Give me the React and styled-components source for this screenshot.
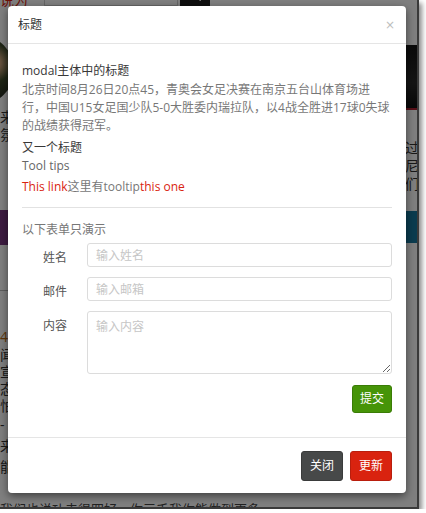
import React from 'react';
import styled, { createGlobalStyle } from 'styled-components';
import { Search } from 'lucide-react';

const GlobalStyle = createGlobalStyle`
  html, body {
    margin: 0;
    padding: 0;
    background: #fff;
  }
  body {
    font-family: "Open Sans", "Noto Sans CJK SC", sans-serif;
  }
  * {
    box-sizing: border-box;
  }
`;

const Frame = styled.div`
  position: relative;
  width: 419px;
  height: 509px;
  overflow: hidden;
  background: #fff;
  border-right: 2px solid #3a3a3a;
  border-bottom: 2px solid #3a3a3a;
  box-shadow: 3px 3px 5px rgba(0, 0, 0, 0.45);
`;

/* page behind the backdrop */
const Page = styled.div`
  display: flex;
  flex-direction: column;
  height: 100%;
  font-size: 14px;
  color: #333;
`;

const TopBar = styled.div`
  display: flex;
  align-items: flex-end;
  height: 6px;
  flex-shrink: 0;
`;

const Brand = styled.span`
  width: 44px;
  flex-shrink: 0;
  color: #d9230f;
  font-size: 14px;
  line-height: 18px;
  margin-bottom: -3px;
`;

const SearchBox = styled.div`
  width: 134px;
  height: 30px;
  flex-shrink: 0;
  border: 1px solid #ccc;
  background: #fff;
  color: #999;
  font-size: 13px;
  padding: 0 10px;
  display: flex;
  align-items: flex-end;
  padding-bottom: 7px;
`;

const SearchButton = styled.div`
  width: 30px;
  height: 30px;
  margin-left: 2px;
  flex-shrink: 0;
  background: #1e1e1e;
  color: #fff;
  display: flex;
  align-items: flex-end;
  justify-content: center;
  padding-bottom: 4px;
`;

const Columns = styled.div`
  flex: 1;
  display: flex;
  min-height: 0;
  overflow: hidden;
`;

const SideCol = styled.div`
  width: ${(p) => p.$width}px;
  flex-shrink: 0;
  overflow: hidden;
  display: flex;
  flex-direction: column;
  align-items: ${(p) => (p.$right ? 'flex-start' : 'flex-end')};
`;

const MainCol = styled.div`
  flex: 1;
`;

const Avatar = styled.div`
  flex-shrink: 0;
  width: 70px;
  height: 70px;
  margin-top: 29px;
  border-radius: 50%;
  background: radial-gradient(circle at 70% 40%, #c9a27a 0 12%, #3d4a2a 30%, #1a1a1a 70%);
`;

const Photo = styled.div`
  flex-shrink: 0;
  width: 100%;
  height: 65px;
  margin-top: 39px;
  background: linear-gradient(180deg, #141414, #2a2a2a 60%, #101010);
  border-bottom: 2px solid #b02030;
`;

const SideText = styled.div`
  width: 14px;
  flex-shrink: 0;
  font-size: 14px;
  line-height: ${(p) => p.$lh || 18}px;
  margin-top: ${(p) => p.$top || 0}px;
  color: ${(p) => p.$color || '#333'};
  word-break: break-all;
`;

const Band = styled.div`
  flex-shrink: 0;
  width: 100%;
  height: ${(p) => p.$h}px;
  margin-top: ${(p) => p.$top}px;
  background: ${(p) => p.$color};
`;

const ThinRule = styled.div`
  flex-shrink: 0;
  width: 100%;
  margin-top: ${(p) => p.$top}px;
  border-top: 1px solid #bbb;
`;

const BottomLine = styled.div`
  height: 9px;
  flex-shrink: 0;
  overflow: hidden;
  font-size: 13px;
  line-height: 22px;
  color: #444;
  white-space: nowrap;
`;

const Backdrop = styled.div`
  position: absolute;
  inset: 0;
  background: rgba(0, 0, 0, 0.5);
`;

/* modal */
const Modal = styled.div`
  position: absolute;
  left: 8px;
  top: 6px;
  width: 398px;
  height: 487px;
  background: #fff;
  border-radius: 4px;
  box-shadow: 0 3px 9px rgba(0, 0, 0, 0.5);
  display: flex;
  flex-direction: column;
  font-size: 12px;
`;

const Header = styled.div`
  height: 38px;
  flex-shrink: 0;
  padding: 0 11px 0 10px;
  display: flex;
  align-items: center;
  justify-content: space-between;
  border-bottom: 1px solid #e5e5e5;
`;

const Title = styled.h4`
  margin: 0;
  font-size: 12px;
  font-weight: 400;
  color: #333;
  line-height: 18px;
`;

const Close = styled.button`
  border: none;
  background: none;
  padding: 0;
  font-family: "DejaVu Sans", sans-serif;
  font-size: 12px;
  line-height: 1;
  color: #bdbdbd;
  cursor: pointer;
`;

const Body = styled.div`
  flex: 1;
  padding: 18px 14px 0;
  display: flex;
  flex-direction: column;
`;

const Heading = styled.h5`
  margin: ${(p) => p.$top || 0}px 0 0;
  font-size: 12px;
  font-weight: 400;
  line-height: 18px;
  color: #383838;
`;

const Para = styled.p`
  margin: ${(p) => p.$top || 0}px 0 0;
  font-size: 12px;
  line-height: 18px;
  color: ${(p) => p.$color || '#777'};
`;

const Red = styled.a`
  color: #d9230f;
  text-decoration: none;
`;

const Rule = styled.hr`
  margin: 11px 0 0;
  border: none;
  border-top: 1px solid #e2e2e2;
`;

const Form = styled.form`
  margin-top: 4px;
  display: grid;
  grid-template-columns: 45px 1fr;
  column-gap: 20px;
  row-gap: 10px;
`;

const Label = styled.label`
  text-align: right;
  padding-top: 6px;
  font-size: 12px;
  line-height: 18px;
  color: #555;
`;

const fieldCss = `
  width: 100%;
  border: 1px solid #dcdcdc;
  border-radius: 3px;
  background: #fff;
  font-family: "Open Sans", "Noto Sans CJK SC", sans-serif;
  font-size: 12px;
  color: #555;
  outline: none;
  &::placeholder {
    color: #c6c6c6;
  }
`;

const Input = styled.input`
  ${fieldCss}
  height: 24px;
  padding: 0 8px;
`;

const TextArea = styled.textarea`
  ${fieldCss}
  height: 63px;
  padding: 6px 8px;
  line-height: 18px;
  resize: vertical;
  display: block;
`;

const Actions = styled.div`
  grid-column: 1 / -1;
  display: flex;
  justify-content: flex-end;
  margin-top: 1px;
`;

const colors = {
  default: ['#474949', '#3a3b3b'],
  primary: ['#d9230f', '#b91e0d'],
  success: ['#469408', '#3a7c06'],
};

const Button = styled.button`
  font-family: "Open Sans", "Noto Sans CJK SC", sans-serif;
  font-size: 12px;
  line-height: 18px;
  color: #fff;
  padding: ${(p) => (p.$compact ? '4px 7px' : '5px 8px')};
  border-radius: 3px;
  background: ${(p) => colors[p.$variant][0]};
  border: 1px solid ${(p) => colors[p.$variant][1]};
  cursor: pointer;
`;

const Footer = styled.div`
  flex-shrink: 0;
  border-top: 1px solid #e5e5e5;
  padding: 13px 14px 12px;
  display: flex;
  justify-content: flex-end;
  gap: 7px;
`;

export default function App() {
  return (
    <>
      <GlobalStyle />
      <Frame>
        <Page>
          <TopBar>
            <Brand>说为</Brand>
            <SearchBox>搜索</SearchBox>
            <SearchButton>
              <Search size={14} strokeWidth={2.5} />
            </SearchButton>
          </TopBar>
          <Columns>
            <SideCol $width={14}>
              <Avatar />
              <SideText $top={3}>来氛</SideText>
              <Band $top={66} $h={35} $color="#7b3683" />
              <ThinRule $top={45} />
              <SideText $top={37} $color="#b86a10">4</SideText>
              <SideText $lh={17}>闻宣，态怕</SideText>
              <SideText $lh={21}>-来能</SideText>
            </SideCol>
            <MainCol />
            <SideCol $width={12} $right>
              <Photo />
              <SideText $top={29}>过尼们</SideText>
              <Band $top={18} $h={32} $color="#16789f" />
            </SideCol>
          </Columns>
          <BottomLine>我们也说功夫很四好，你三千我你能做到更多</BottomLine>
        </Page>
        <Backdrop />
        <Modal>
          <Header>
            <Title>标题</Title>
            <Close aria-label="close">×</Close>
          </Header>
          <Body>
            <Heading>modal主体中的标题</Heading>
            <Para $top={1}>
              北京时间8月26日20点45，青奥会女足决赛在南京五台山体育场进行，中国U15女足国少队5-0大胜委内瑞拉队，以4战全胜进17球0失球的战绩获得冠军。
            </Para>
            <Heading $top={4}>又一个标题</Heading>
            <Para $color="#666">Tool tips</Para>
            <Para $top={3} $color="#777">
              <Red href="#">This link</Red>这里有tooltip<Red href="#">this one</Red>
            </Para>
            <Rule />
            <Para $top={13}>以下表单只演示</Para>
            <Form onSubmit={(e) => e.preventDefault()}>
              <Label htmlFor="name">姓名</Label>
              <Input id="name" type="text" placeholder="输入姓名" />
              <Label htmlFor="mail">邮件</Label>
              <Input id="mail" type="text" placeholder="输入邮箱" />
              <Label htmlFor="content">内容</Label>
              <TextArea id="content" placeholder="输入内容" />
              <Actions>
                <Button type="submit" $variant="success" $compact>提交</Button>
              </Actions>
            </Form>
          </Body>
          <Footer>
            <Button $variant="default">关闭</Button>
            <Button $variant="primary">更新</Button>
          </Footer>
        </Modal>
      </Frame>
    </>
  );
}
